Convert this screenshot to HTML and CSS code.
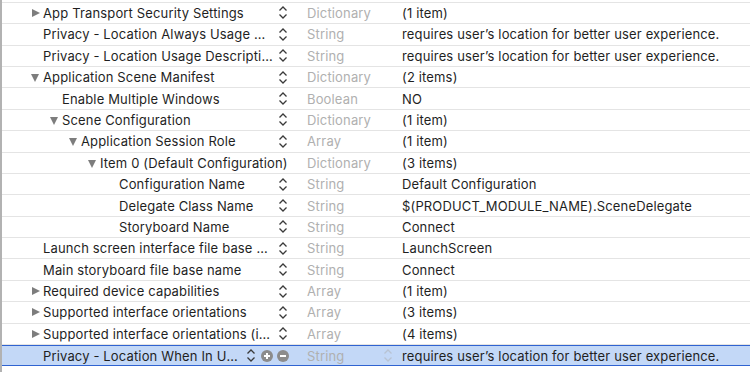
FILE: index.html
```html
<!DOCTYPE html>
<html>

	<head>
		<meta charset="UTF-8">
		<title>Info.plist</title>
		<link rel="stylesheet" href="styles.css">
	</head>

	<body>
		<div id="plist">
			<!--上一行，只露出一点-->
			<div class="row hidden-top">
				<div class="key l0"></div>
				<div class="step"><svg viewBox="0 0 10 15"><path d="M1.5 5.5 L5 2 L8.5 5.5 M1.5 9.5 L5 13 L8.5 9.5"/></svg></div>
			</div>
			<div class="row">
				<div class="key l0"><span class="tri right"></span><span class="name">App Transport Security Settings</span></div>
				<div class="step"><svg viewBox="0 0 10 15"><path d="M1.5 5.5 L5 2 L8.5 5.5 M1.5 9.5 L5 13 L8.5 9.5"/></svg></div>
				<div class="type">Dictionary</div>
				<div class="value">(1 item)</div>
			</div>
			<div class="row">
				<div class="key l0"><span class="tri"></span><span class="name">Privacy - Location Always Usage Description</span></div>
				<div class="step"><svg viewBox="0 0 10 15"><path d="M1.5 5.5 L5 2 L8.5 5.5 M1.5 9.5 L5 13 L8.5 9.5"/></svg></div>
				<div class="type">String</div>
				<div class="value">requires user’s location for better user experience.</div>
			</div>
			<div class="row">
				<div class="key l0"><span class="tri"></span><span class="name">Privacy - Location Usage Description</span></div>
				<div class="step"><svg viewBox="0 0 10 15"><path d="M1.5 5.5 L5 2 L8.5 5.5 M1.5 9.5 L5 13 L8.5 9.5"/></svg></div>
				<div class="type">String</div>
				<div class="value">requires user’s location for better user experience.</div>
			</div>
			<div class="row">
				<div class="key l0"><span class="tri down"></span><span class="name">Application Scene Manifest</span></div>
				<div class="step"><svg viewBox="0 0 10 15"><path d="M1.5 5.5 L5 2 L8.5 5.5 M1.5 9.5 L5 13 L8.5 9.5"/></svg></div>
				<div class="type">Dictionary</div>
				<div class="value">(2 items)</div>
			</div>
			<div class="row">
				<div class="key l1"><span class="tri"></span><span class="name">Enable Multiple Windows</span></div>
				<div class="step"><svg viewBox="0 0 10 15"><path d="M1.5 5.5 L5 2 L8.5 5.5 M1.5 9.5 L5 13 L8.5 9.5"/></svg></div>
				<div class="type">Boolean</div>
				<div class="value">NO</div>
			</div>
			<div class="row">
				<div class="key l1"><span class="tri down"></span><span class="name">Scene Configuration</span></div>
				<div class="step"><svg viewBox="0 0 10 15"><path d="M1.5 5.5 L5 2 L8.5 5.5 M1.5 9.5 L5 13 L8.5 9.5"/></svg></div>
				<div class="type">Dictionary</div>
				<div class="value">(1 item)</div>
			</div>
			<div class="row">
				<div class="key l2"><span class="tri down"></span><span class="name">Application Session Role</span></div>
				<div class="step"><svg viewBox="0 0 10 15"><path d="M1.5 5.5 L5 2 L8.5 5.5 M1.5 9.5 L5 13 L8.5 9.5"/></svg></div>
				<div class="type">Array</div>
				<div class="value">(1 item)</div>
			</div>
			<div class="row">
				<div class="key l3 wide"><span class="tri down"></span><span class="name">Item 0 (Default Configuration)</span></div>
				<div class="step"></div>
				<div class="type">Dictionary</div>
				<div class="value">(3 items)</div>
			</div>
			<div class="row">
				<div class="key l4"><span class="tri"></span><span class="name">Configuration Name</span></div>
				<div class="step"><svg viewBox="0 0 10 15"><path d="M1.5 5.5 L5 2 L8.5 5.5 M1.5 9.5 L5 13 L8.5 9.5"/></svg></div>
				<div class="type">String</div>
				<div class="value">Default Configuration</div>
			</div>
			<div class="row">
				<div class="key l4"><span class="tri"></span><span class="name">Delegate Class Name</span></div>
				<div class="step"><svg viewBox="0 0 10 15"><path d="M1.5 5.5 L5 2 L8.5 5.5 M1.5 9.5 L5 13 L8.5 9.5"/></svg></div>
				<div class="type">String</div>
				<div class="value">$(PRODUCT_MODULE_NAME).SceneDelegate</div>
			</div>
			<div class="row">
				<div class="key l4"><span class="tri"></span><span class="name">Storyboard Name</span></div>
				<div class="step"><svg viewBox="0 0 10 15"><path d="M1.5 5.5 L5 2 L8.5 5.5 M1.5 9.5 L5 13 L8.5 9.5"/></svg></div>
				<div class="type">String</div>
				<div class="value">Connect</div>
			</div>
			<div class="row">
				<div class="key l0"><span class="tri"></span><span class="name">Launch screen interface file base name</span></div>
				<div class="step"><svg viewBox="0 0 10 15"><path d="M1.5 5.5 L5 2 L8.5 5.5 M1.5 9.5 L5 13 L8.5 9.5"/></svg></div>
				<div class="type">String</div>
				<div class="value">LaunchScreen</div>
			</div>
			<div class="row">
				<div class="key l0"><span class="tri"></span><span class="name">Main storyboard file base name</span></div>
				<div class="step"><svg viewBox="0 0 10 15"><path d="M1.5 5.5 L5 2 L8.5 5.5 M1.5 9.5 L5 13 L8.5 9.5"/></svg></div>
				<div class="type">String</div>
				<div class="value">Connect</div>
			</div>
			<div class="row">
				<div class="key l0"><span class="tri right"></span><span class="name">Required device capabilities</span></div>
				<div class="step"><svg viewBox="0 0 10 15"><path d="M1.5 5.5 L5 2 L8.5 5.5 M1.5 9.5 L5 13 L8.5 9.5"/></svg></div>
				<div class="type">Array</div>
				<div class="value">(1 item)</div>
			</div>
			<div class="row">
				<div class="key l0"><span class="tri right"></span><span class="name">Supported interface orientations</span></div>
				<div class="step"><svg viewBox="0 0 10 15"><path d="M1.5 5.5 L5 2 L8.5 5.5 M1.5 9.5 L5 13 L8.5 9.5"/></svg></div>
				<div class="type">Array</div>
				<div class="value">(3 items)</div>
			</div>
			<div class="row">
				<div class="key l0"><span class="tri right"></span><span class="name">Supported interface orientations (iPad)</span></div>
				<div class="step"><svg viewBox="0 0 10 15"><path d="M1.5 5.5 L5 2 L8.5 5.5 M1.5 9.5 L5 13 L8.5 9.5"/></svg></div>
				<div class="type">Array</div>
				<div class="value">(4 items)</div>
			</div>
			<!--选中行-->
			<div class="row selected">
				<div class="key l0 short"><span class="tri"></span><span class="name">Privacy - Location When In Use Usage Description</span></div>
				<div class="step"><svg viewBox="0 0 10 15"><path d="M1.5 5.5 L5 2 L8.5 5.5 M1.5 9.5 L5 13 L8.5 9.5"/></svg></div>
				<div class="btns">
					<svg viewBox="0 0 12 12"><circle cx="6" cy="6" r="6"/><path d="M6 3 V9 M3 6 H9"/></svg>
					<svg viewBox="0 0 12 12"><circle cx="6" cy="6" r="6"/><path d="M3 6 H9"/></svg>
				</div>
				<div class="type">String<svg class="popup" viewBox="0 0 10 15"><path d="M1.5 5.5 L5 2 L8.5 5.5 M1.5 9.5 L5 13 L8.5 9.5"/></svg></div>
				<div class="value">requires user’s location for better user experience.</div>
			</div>
			<div class="row"></div>
		</div>
	</body>

</html>
```

FILE: styles.css
```css
* {
	margin: 0;
	padding: 0;
	box-sizing: border-box;
}

body,
html {
	height: 100%;
	overflow: hidden;
	background: #fff;
}

body {
	font-family: Inter, "Liberation Sans", sans-serif;
	font-size: 13px;
	letter-spacing: 0.15px;
	color: #1f1f1f;
}

#plist {
	height: 100%;
	border-left: 2px solid #b2b2b2;
	display: flex;
	flex-direction: column;
}

.row {
	flex: 0 0 21.4px;
	height: 21.4px;
	display: flex;
	align-items: center;
	border-bottom: 1px solid #e4e4e4;
}

.hidden-top {
	margin-top: -18.6px;
}

.key {
	width: 272px;
	display: flex;
	align-items: center;
	overflow: hidden;
	white-space: nowrap;
}

.key .name {
	overflow: hidden;
	text-overflow: ellipsis;
}

.l0 { padding-left: 29px; }
.l1 { padding-left: 48px; }
.l2 { padding-left: 67px; }
.l3 { padding-left: 86px; }
.l4 { padding-left: 105px; }

.key.wide,
.key.wide .name {
	overflow: visible;
}

.key.short {
	width: 240px;
}

.tri {
	flex: 0 0 12px;
	height: 10px;
	position: relative;
}

.tri.right::before {
	content: "";
	position: absolute;
	left: 1px;
	top: 1px;
	border-left: 8px solid #7d7d7d;
	border-top: 4.5px solid transparent;
	border-bottom: 4.5px solid transparent;
}

.tri.down::before {
	content: "";
	position: absolute;
	left: 0;
	top: 2px;
	border-top: 8px solid #7d7d7d;
	border-left: 4.5px solid transparent;
	border-right: 4.5px solid transparent;
}

.step {
	flex: 0 0 14px;
	margin-left: 2px;
	display: flex;
	justify-content: center;
}

.step svg,
.popup {
	width: 10px;
	height: 15px;
	fill: none;
	stroke: #3a3a3a;
	stroke-width: 1.3;
}

.type {
	width: 95px;
	margin-left: 17px;
	color: #b0b0b0;
	display: flex;
	align-items: center;
	white-space: nowrap;
}

.value {
	white-space: nowrap;
}

.btns {
	display: flex;
	gap: 4px;
	margin-left: 3px;
}

.btns svg {
	width: 12px;
	height: 12px;
}

.btns circle {
	fill: #8c8c8c;
}

.btns path {
	stroke: #fff;
	stroke-width: 2;
}

.selected {
	background: #c3d8f7;
	border-top: 1px solid #2f63d1;
	border-bottom: 1px solid #2f63d1;
}

.selected .type {
	margin-left: 18px;
}

.popup {
	stroke: #b8c3d3;
	margin-left: auto;
	margin-right: 9px;
}
```
